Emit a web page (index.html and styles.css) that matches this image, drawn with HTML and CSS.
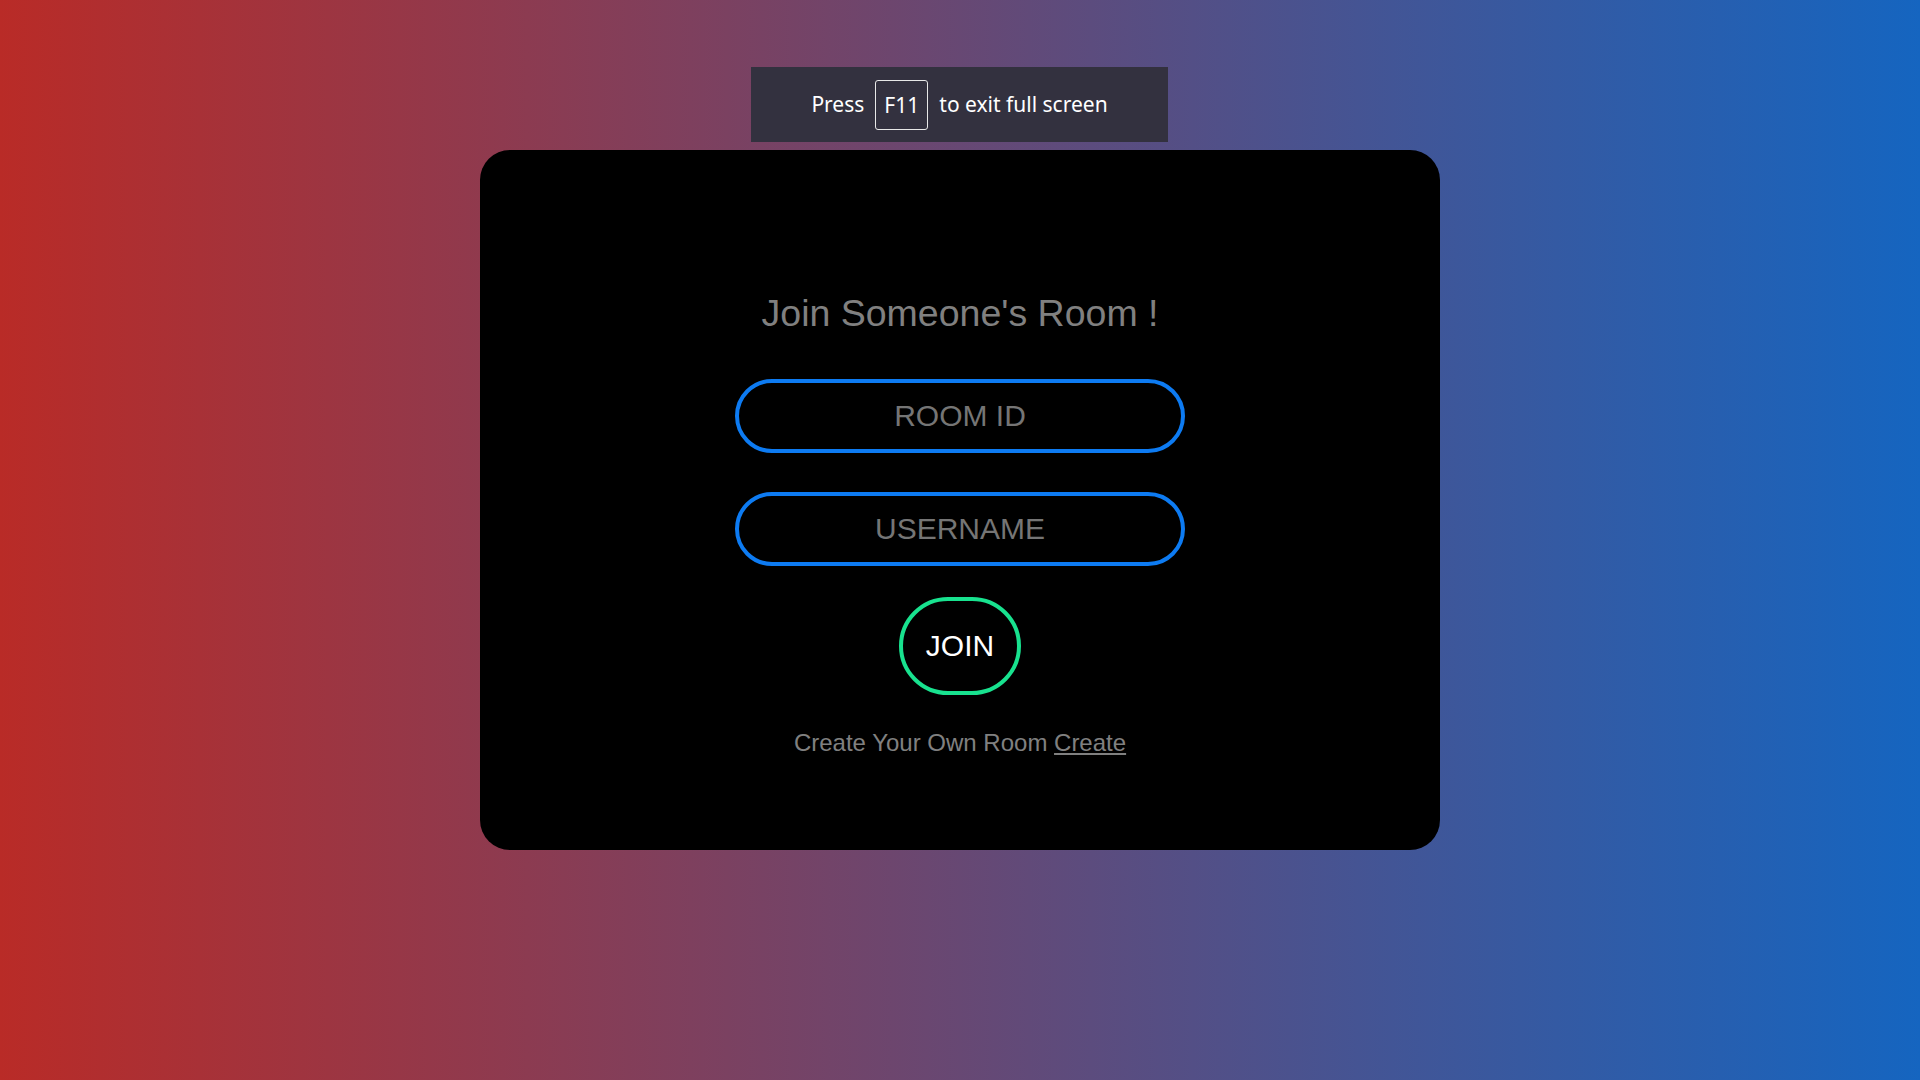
FILE: index.html
```html
<!DOCTYPE html>
<html>
<head>
<meta charset="utf-8">
<title>Join Room</title>
<link rel="stylesheet" href="styles.css">
</head>
<body>
<div class="fs-toast">
  <span class="fs-text">Press</span>
  <span class="fs-key">F11</span>
  <span class="fs-text">to exit full screen</span>
</div>
<main class="page">
  <section class="card">
    <h1 class="title">Join Someone's Room !</h1>
    <input class="field" type="text" placeholder="ROOM ID">
    <input class="field field-second" type="text" placeholder="USERNAME">
    <button class="join">JOIN</button>
    <p class="create">Create Your Own Room <a href="#" class="create-link">Create</a></p>
  </section>
</main>
</body>
</html>
```
FILE: styles.css
```css
html, body {
  margin: 0;
  padding: 0;
  height: 100%;
}
body {
  background: linear-gradient(to right, #b92b27, #1565c0);
  font-family: "Liberation Sans", Arial, sans-serif;
  overflow: hidden;
}
.page {
  display: flex;
  justify-content: center;
  padding-top: 150px;
}
.card {
  width: 960px;
  height: 700px;
  background: #000;
  border-radius: 30px;
  display: flex;
  flex-direction: column;
  align-items: center;
  box-sizing: border-box;
  padding-top: 143px;
}
.title {
  margin: 0;
  font-size: 37.5px;
  font-weight: normal;
  color: #808080;
  line-height: 41px;
}
.field {
  margin-top: 45px;
  width: 450px;
  height: 74px;
  box-sizing: border-box;
  border: 4px solid #0d7bf2;
  border-radius: 40px;
  background: #000;
  text-align: center;
  font-family: "Liberation Sans", Arial, sans-serif;
  font-size: 30px;
  color: #808080;
  outline: none;
  padding: 0 20px;
}
.field::placeholder {
  color: #757575;
}
.field-second {
  margin-top: 39px;
}
.join {
  margin-top: 31px;
  width: 122px;
  height: 98px;
  box-sizing: border-box;
  border: 4px solid #18e28f;
  border-radius: 50px;
  background: #000;
  color: #fff;
  font-family: "Liberation Sans", Arial, sans-serif;
  font-size: 30px;
  padding: 0;
  cursor: pointer;
}
.create {
  margin: 35px 0 0;
  font-size: 24px;
  line-height: 26px;
  color: #808080;
}
.create-link {
  color: #808080;
  text-decoration: underline;
}
.fs-toast {
  position: absolute;
  top: 67px;
  left: 751px;
  width: 417px;
  height: 75px;
  background: #33313f;
  display: flex;
  align-items: center;
  justify-content: center;
  gap: 11px;
  font-family: "Noto Sans", "Open Sans", sans-serif;
  font-size: 21px;
  color: #fff;
}
.fs-text {
  position: relative;
  top: -1px;
}
.fs-key {
  display: flex;
  align-items: center;
  justify-content: center;
  width: 53px;
  height: 50px;
  box-sizing: border-box;
  border: 1px solid #e8e8e8;
  border-radius: 3px;
}
```
